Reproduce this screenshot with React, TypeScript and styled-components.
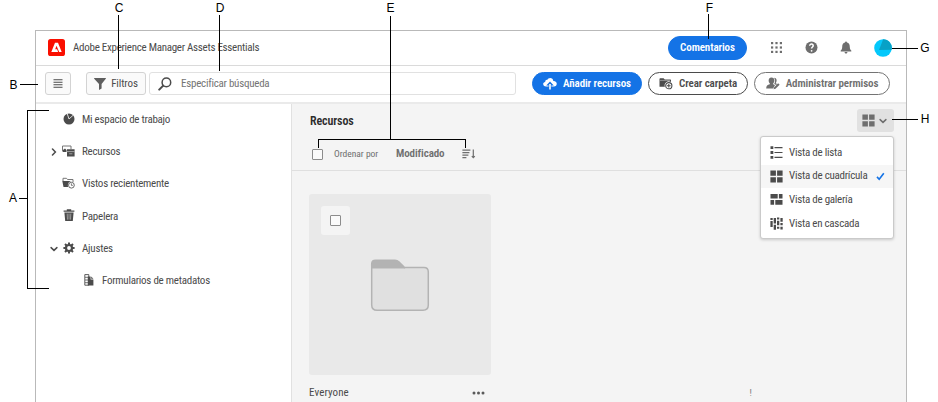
import React from 'react';
import styled, { createGlobalStyle } from 'styled-components';

const GlobalStyle = createGlobalStyle`
  *, *::before, *::after { box-sizing: border-box; }
  html, body { margin: 0; width: 938px; height: 402px; overflow: hidden; background: #fff; }
  body { font-family: Roboto, "Open Sans", sans-serif; font-size: 11px; font-stretch: 85%; color: #4b4b4b; }
  button { font: inherit; font-stretch: 85%; color: inherit; padding: 0; margin: 0; }
  svg { display: block; flex: none; }
`;

const Figure = styled.div`
  position: relative;
  width: 938px;
  height: 402px;
  padding: 30px 31px 0 35px;
  overflow: hidden;
`;

const Window = styled.div`
  display: flex;
  flex-direction: column;
  height: 372px;
  border: 1px solid #b9b9b9;
  border-bottom: 0;
  background: #fff;
`;

const Text = styled.span<{ $track?: number; $bold?: boolean; $size?: number; $color?: string }>`
  white-space: nowrap;
  line-height: 16px;
  letter-spacing: ${p => p.$track ?? (p.$bold ? -0.1 : -0.25)}px;
  font-weight: ${p => (p.$bold ? 650 : 400)};
  font-size: ${p => p.$size ?? 11}px;
  color: ${p => p.$color ?? 'inherit'};
`;

const Header = styled.header`
  display: flex;
  align-items: center;
  height: 35px;
  padding: 0 14px 1px 12px;
  border-bottom: 1px solid #dadada;
  gap: 8px;
`;

const HeaderActions = styled.div`
  display: flex;
  align-items: center;
  margin-left: auto;
`;

const HeaderIcons = styled.div`
  display: flex;
  align-items: center;
  margin-left: 23px;
  gap: 22px;
`;

const Pill = styled.button<{ $width: number; $height?: number; $tone: 'blue' | 'dark' | 'gray' }>`
  display: flex;
  align-items: center;
  justify-content: center;
  flex: none;
  width: ${p => p.$width}px;
  height: ${p => p.$height ?? 23}px;
  border-radius: 12px;
  border: 1px solid ${p => (p.$tone === 'blue' ? '#1473e6' : p.$tone === 'dark' ? '#4b4b4b' : '#747474')};
  background: ${p => (p.$tone === 'blue' ? '#1473e6' : '#fff')};
  color: ${p => (p.$tone === 'blue' ? '#fff' : p.$tone === 'dark' ? '#4b4b4b' : '#6e6e6e')};
  gap: 6px;
`;

const Toolbar = styled.div`
  display: flex;
  align-items: center;
  height: 38px;
  padding: 0 16px 1px 9px;
  border-bottom: 2px solid #eaeaea;
`;

const SquareButton = styled.button<{ $width: number }>`
  display: flex;
  align-items: center;
  justify-content: center;
  width: ${p => p.$width}px;
  height: 23px;
  gap: 5px;
  border: 1px solid #d3d3d3;
  border-radius: 3px;
  background: #fafafa;
`;

const FilterButton = styled(SquareButton)`
  margin-left: 15px;
`;

const SearchField = styled.div`
  display: flex;
  align-items: center;
  width: 367px;
  height: 23px;
  margin-left: 3px;
  padding-left: 8px;
  gap: 9px;
  border: 1px solid #e1e1e1;
  border-radius: 3px;
`;

const ToolbarActions = styled.div`
  display: flex;
  gap: 6px;
  margin-left: auto;
`;

const Body = styled.div`
  display: flex;
  flex: 1;
  min-height: 0;
`;

const Sidebar = styled.nav`
  width: 256px;
  border-right: 1px solid #e1e1e1;
`;

const NavRow = styled.div<{ $nested?: boolean }>`
  display: grid;
  grid-template-columns: 12px 13px auto;
  align-items: center;
  justify-content: start;
  height: 32.2px;
  padding-left: ${p => (p.$nested ? 34 : 14)}px;
  & > span { margin-left: 7px; }
  & > :nth-child(2) { justify-self: center; margin-bottom: 2px; }
`;

const Main = styled.main`
  flex: 1;
  background: #f4f4f4;
`;

const ContentHeader = styled.div`
  height: 67px;
  border-bottom: 1px solid #dfdfdf;
  padding: 5px 12px 0 18px;
`;

const TitleRow = styled.div`
  position: relative;
  display: flex;
  align-items: center;
  justify-content: space-between;
  height: 23px;
`;

const ViewButton = styled.button`
  display: flex;
  align-items: center;
  justify-content: center;
  gap: 4px;
  width: 37px;
  height: 23px;
  padding-right: 2px;
  border: 0;
  border-radius: 3px;
  background: #e1e1e1;
  color: #6e6e6e;
`;

const Menu = styled.div`
  position: absolute;
  top: 27px;
  right: 0;
  width: 134px;
  height: 103px;
  padding: 4px 0;
  border: 1px solid #cacaca;
  border-radius: 3px;
  background: #fff;
  box-shadow: 0 1px 3px rgba(0, 0, 0, 0.18);
  z-index: 2;
`;

const MenuItem = styled.div<{ $active?: boolean }>`
  display: flex;
  align-items: center;
  height: 23.6px;
  padding: 0 8px 0 9px;
  gap: 6px;
  background: ${p => (p.$active ? '#f6f6f6' : 'transparent')};
  & > :nth-child(3) { margin-left: auto; }
`;

const SortRow = styled.div`
  display: flex;
  align-items: center;
  height: 16px;
  margin-top: 14px;
  padding-left: 2px;
`;

const Checkbox = styled.span`
  width: 11px;
  height: 11px;
  border: 1px solid #8c8c8c;
  border-radius: 1px;
  background: #fafafa;
`;

const SortLabel = styled.div`
  display: flex;
  width: 62px;
  margin-left: 11px;
`;

const SortValue = styled.div`
  display: flex;
  width: 66px;
`;

const Gallery = styled.div`
  display: flex;
  padding: 23px 0 0 17px;
`;

const AssetCard = styled.article`
  width: 182px;
`;

const Thumbnail = styled.div`
  display: grid;
  grid-template-rows: 29px auto;
  width: 182px;
  height: 181px;
  padding: 12px;
  border-radius: 3px;
  background: #e9e9e9;
  & > svg { justify-self: center; margin-top: 24px; }
`;

const SelectBox = styled.div`
  display: grid;
  place-items: center;
  width: 29px;
  height: 29px;
  border-radius: 3px;
  background: #f4f4f4;
`;

const CardFooter = styled.div`
  display: flex;
  align-items: center;
  justify-content: space-between;
  height: 35px;
  padding-right: 6px;
`;

const CountStub = styled.div`
  margin: 190px 0 0 258.6px;
  color: #777;
  font-size: 9.5px;
  line-height: 17px;
`;

const Annotations = styled.svg`
  position: absolute;
  inset: 0;
  pointer-events: none;
  z-index: 5;
  text { font: 12px "Liberation Sans", Arial, sans-serif; fill: #000; text-anchor: middle; }
  path { fill: none; stroke: #000; stroke-width: 1; shape-rendering: crispEdges; }
`;

const callouts = [
  { label: 'A', x: 13, y: 202, d: 'M19 198.5H27M49 110.5H27.5V288.5H49' },
  { label: 'B', x: 13.5, y: 89, d: 'M20 84.5H38' },
  { label: 'C', x: 119, y: 12, d: 'M118.5 15V69' },
  { label: 'D', x: 220, y: 12, d: 'M219.5 15V71' },
  { label: 'E', x: 390.5, y: 12, d: 'M390.5 16V139M318.5 148V139.5H465.5V148' },
  { label: 'F', x: 709.5, y: 12, d: 'M708.5 14V39' },
  { label: 'G', x: 925, y: 52, d: 'M892 48.5H918' },
  { label: 'H', x: 925, y: 123, d: 'M892 119.5H918' },
];

const Logo = () => (
  <svg width="17" height="17" viewBox="0 0 17 17">
    <rect width="17" height="17" rx="2.6" fill="#fa0f00" />
    <path d="M7 3.7h3l3.7 9.3h-2.5L8.5 6.8l-1.3 3.5h1.9l1 2.7H3.3z" fill="#fff" />
  </svg>
);

const AppsGrid = () => (
  <svg width="13" height="13" viewBox="0 0 13 13" fill="#6e6e6e">
    {[1, 5.4, 9.8].map(y => [1, 5.4, 9.8].map(x => <rect key={`${x}-${y}`} x={x} y={y} width="2.2" height="2.2" />))}
  </svg>
);

const HelpIcon = () => (
  <svg width="13" height="13" viewBox="0 0 13 13">
    <circle cx="6.5" cy="6.5" r="6" fill="#6e6e6e" />
    <path d="M4.7 4.8C4.8 2.4 8.4 2.7 8.2 4.8c0 1.2-1.6 1.3-1.6 2.8" fill="none" stroke="#fff" strokeWidth="1.5" />
    <circle cx="6.6" cy="9.8" r=".9" fill="#fff" />
  </svg>
);

const BellIcon = () => (
  <svg width="12" height="13" viewBox="0 0 12 13" fill="#6e6e6e">
    <path d="M5 1.6a1 1 0 0 1 2 0C9 2 9.8 3.5 9.8 6c0 1.8.7 2.8 1.5 3.6v.9H.7v-.9C1.5 8.8 2.2 7.8 2.2 6 2.2 3.5 3 2 5 1.6zM4.6 11h2.8c0 2-2.8 2-2.8 0z" />
  </svg>
);

const Avatar = () => (
  <svg width="18" height="18" viewBox="0 0 18 18">
    <circle cx="9" cy="9" r="8.8" fill="#04c8fb" />
    <path d="M9.2.2A8.8 8.8 0 0 1 17.7 10.7L5 10.9z" fill="#07a1c6" />
  </svg>
);

const HamburgerIcon = () => (
  <svg width="10" height="9" viewBox="0 0 10 9"><path d="M.5.7h9M.5 3.2h9M.5 5.7h9M.5 8.2h9" stroke="#4b4b4b" strokeWidth="1.1" /></svg>
);

const FunnelIcon = () => (
  <svg width="12" height="12" viewBox="0 0 12 12" fill="#5e5e5e"><path d="M.5 0h11a.4.4 0 0 1 .3.7L7.6 6v4.5L5 12V6L.2.7A.4.4 0 0 1 .5 0z" /></svg>
);

const SearchIcon = () => (
  <svg width="14" height="14" viewBox="0 0 14 14" fill="none" stroke="#4b4b4b"><circle cx="8.4" cy="5.4" r="4.3" strokeWidth="1.5" /><path d="M5.2 8.6L1.2 12.6" strokeWidth="2" strokeLinecap="round" /></svg>
);

const UploadIcon = () => (
  <svg width="14" height="13" viewBox="0 0 14 13" fill="#fff">
    <path d="M5.6 9.6H3.1C-.7 9.4-.6 5.2 2.2 5 2.2 3.2 3.4 2.6 4.3 2.9 5.2.2 10.2.1 10.3 3.9c4.5-.2 4.5 5.5.6 5.7H8.4V8.6h2.4L7 4.6 3.2 8.6h2.4zM6.2 7h1.6v5.6H6.2z" />
  </svg>
);

const NewFolderIcon = () => (
  <svg width="14" height="13" viewBox="0 0 14 13">
    <path d="M.5 2Q.5 1.2 1.2 1.2H4.6L5.8 2.5H11.4Q12 2.5 12 3V5.1A4 4 0 0 0 5.9 9.7H.5z" fill="#4b4b4b" />
    <path d="M1 3.4h10" stroke="#fff" strokeWidth=".4" />
    <circle cx="9.8" cy="8.7" r="3.1" fill="#fff" stroke="#4b4b4b" strokeWidth="1.1" />
    <path d="M9.8 6.9v3.6M8 8.7h3.6" stroke="#4b4b4b" strokeWidth="1.1" />
  </svg>
);

const PermissionsIcon = () => (
  <svg width="14" height="13" viewBox="0 0 14 13" fill="#6e6e6e">
    <path d="M5.4.5c4 0 3.4 4.8 1.8 5.8v1l1.8.9-2 3.3H.2C.2 8.6 1.5 8 3.8 7.3v-1C2.2 5 2 .5 5.4.5z" />
    <path d="M8 .8c3 0 3.3 3.7 1.6 5.4l1.5.9-.9.8-2-.9C9.3 5.1 9.6 2.4 8 .8z" />
    <path d="M8 10.4l4.1-4.2 1.5 1.5-4.1 4.1-2 .5z" />
  </svg>
);

const Chevron = ({ down }: { down?: boolean }) => (
  <svg width="8" height="8" viewBox="0 0 8 8" fill="none" stroke="currentColor" strokeWidth="1.5" strokeLinecap="round">
    <path d={down ? 'M1.1 2.6L4 5.4 6.9 2.6' : 'M2.5 1L5.4 4 2.5 7'} />
  </svg>
);

const WorkspaceIcon = () => (
  <svg width="12" height="12" viewBox="0 0 12 12"><circle cx="6" cy="6" r="5.5" fill="#4b4b4b" /><path d="M6 6L4.2.6M6 6L10.2 2.2" stroke="#fff" strokeWidth=".8" /></svg>
);

const AssetsIcon = () => (
  <svg width="13" height="12" viewBox="0 0 13 12">
    <path d="M.5 6.5V1H9v3" fill="none" stroke="#777" />
    <path d="M1 7V5l2-1.5L4.5 5v2zM5 4.2h7.6v7.3H5z" fill="#4b4b4b" />
    <path d="M5 6.6h7.5M7.2 8.8h3.2" stroke="#ddd" strokeWidth=".6" />
  </svg>
);

const RecentIcon = () => (
  <svg width="13" height="12" viewBox="0 0 13 12">
    <path d="M1 4V1.3h3.5l1 1.2H11V5" fill="none" stroke="#777" />
    <path d="M.3 4h8.8C6 5 5.4 8 6.2 10H1.5z" fill="#4b4b4b" />
    <circle cx="9.4" cy="8.2" r="2.9" fill="#fff" stroke="#5a5a5a" strokeWidth=".9" />
    <path d="M9.4 6.4v2h1.4" fill="none" stroke="#5a5a5a" strokeWidth=".8" />
  </svg>
);

const TrashIcon = () => (
  <svg width="12" height="13" viewBox="0 0 12 13"><path d="M.6 1.4h3.2V.2h4.4v1.2h3.2v1.3H.6zM1.4 3.5h9.2l-.8 8.6H2.2z" fill="#4b4b4b" /><path d="M4.2 4.6l.3 6M6 4.6v6M7.8 4.6l-.3 6" stroke="#ccc" strokeWidth=".6" /></svg>
);

const GearIcon = () => (
  <svg width="12" height="12" viewBox="0 0 12 12" fill="none" stroke="#4b4b4b">
    <circle cx="6" cy="6" r="3" strokeWidth="2.2" />
    <path d="M6 .4v2M6 9.6v2M.4 6h2M9.6 6h2M2 2l1.5 1.5M8.5 8.5L10 10M10 2L8.5 3.5M3.5 8.5L2 10" strokeWidth="2" />
  </svg>
);

const MetadataIcon = () => (
  <svg width="10" height="12" viewBox="0 0 10 12">
    <path d="M.8.6h4v10.6h-4z" fill="#fff" stroke="#4b4b4b" strokeWidth=".9" />
    <path d="M1 3.3h4M1 6h4M1 8.7h4" stroke="#4b4b4b" strokeWidth=".8" />
    <path d="M3.8 2.4h2.8v3h2.8v6H3.8zM7.2 2.4l2.2 2.4H7.2z" fill="#4b4b4b" />
  </svg>
);

const SortIcon = () => (
  <svg width="14" height="10" viewBox="0 0 14 10" fill="none" stroke="#6e6e6e">
    <path d="M.4 1.1h8M.4 3.6h7M.4 6.1h6M.4 8.6h4" strokeWidth="1.2" />
    <path d="M11.3.6v7.8M9.8 7.1l1.5 1.5 1.5-1.5" strokeWidth="1.2" />
  </svg>
);

const GridIcon = ({ color = '#4b4b4b' }: { color?: string }) => (
  <svg width="13" height="13" viewBox="0 0 13 13" fill={color}><path d="M.4.5h5.5v5.3H.4zM7.1.5h5.5v5.3H7.1zM.4 7.2h5.5v5.3H.4zM7.1 7.2h5.5v5.3H7.1z" /></svg>
);

const ListIcon = () => (
  <svg width="13" height="13" viewBox="0 0 13 13"><path d="M.5.3h2.8v2.8H.5zM.5 5.1h2.8v2.8H.5zM.5 9.9h2.8v2.8H.5z" fill="#4b4b4b" /><path d="M4.5 1.7h8M4.5 6.5h8M4.5 11.3h8" stroke="#4b4b4b" strokeWidth="1.2" /></svg>
);

const GalleryIcon = () => (
  <svg width="13" height="13" viewBox="0 0 13 13" fill="#4b4b4b"><path d="M.5 1h7.2v4.5H.5zM8.9 1h3.6v4.5H8.9zM.5 7h3.6v4.8H.5zM5.3 7h7.2v4.8H5.3z" /></svg>
);

const WaterfallIcon = () => (
  <svg width="13" height="13" viewBox="0 0 13 13" fill="#4b4b4b"><path d="M.4 1h2.3v2H.4zM.4 4h2.3v6H.4zM3.7 1h2.3v5.5H3.7zM3.7 7.8h2.3v4.9H3.7zM7 .5h2.3v2H7zM7 3.8h2.3v4.5H7zM7 9.7h2.3v2H7zM10.4 1h2.3v3.8h-2.3zM10.4 6.1h2.3v2.2h-2.3zM10.4 9.7h2.3v2.8h-2.3z" /></svg>
);

const CheckIcon = () => (
  <svg width="9" height="9" viewBox="0 0 9 9"><path d="M1 4.9L3.2 7.3 7.8 1.2" fill="none" stroke="#1473e6" strokeWidth="1.6" /></svg>
);

const FolderArt = () => (
  <svg width="60" height="53" viewBox="0 0 60 53">
    <path d="M1.7 46V5Q1.7 1.2 5.5 1.2H25Q27.2 1.2 28.8 2.8L34.6 8.6H54Q58.3 8.6 58.3 13V46Q58.3 51.2 53 51.2H7Q1.7 51.2 1.7 46z" fill="#e0e0e0" stroke="#b3b3b3" strokeWidth="1.5" />
    <path d="M1.7 9.5V5Q1.7 1.2 5.5 1.2H25Q27.2 1.2 28.8 2.8L35.4 9.5z" fill="#b3b3b3" />
  </svg>
);

const MoreIcon = () => (
  <svg width="13" height="4" viewBox="0 0 13 4" fill="#5a5a5a"><circle cx="2" cy="2" r="1.5" /><circle cx="6.5" cy="2" r="1.5" /><circle cx="11" cy="2" r="1.5" /></svg>
);

const navItems = [
  { label: 'Mi espacio de trabajo', icon: <WorkspaceIcon /> },
  { label: 'Recursos', icon: <AssetsIcon />, chevron: 'right' },
  { label: 'Vistos recientemente', icon: <RecentIcon /> },
  { label: 'Papelera', icon: <TrashIcon /> },
  { label: 'Ajustes', icon: <GearIcon />, chevron: 'down' },
  { label: 'Formularios de metadatos', icon: <MetadataIcon />, nested: true },
];

const views = [
  { label: 'Vista de lista', icon: <ListIcon /> },
  { label: 'Vista de cuadrícula', icon: <GridIcon />, active: true },
  { label: 'Vista de galería', icon: <GalleryIcon /> },
  { label: 'Vista en cascada', icon: <WaterfallIcon /> },
];

export default function App() {
  return (
    <Figure>
      <GlobalStyle />
      <Window>
        <Header>
          <Logo />
          <Text $track={-0.28}>Adobe Experience Manager Assets Essentials</Text>
          <HeaderActions>
            <Pill $width={79} $height={24} $tone="blue"><Text $bold>Comentarios</Text></Pill>
            <HeaderIcons><AppsGrid /><HelpIcon /><BellIcon /><Avatar /></HeaderIcons>
          </HeaderActions>
        </Header>
        <Toolbar>
          <SquareButton $width={26}><HamburgerIcon /></SquareButton>
          <FilterButton $width={60}><FunnelIcon /><Text $track={-0.1}>Filtros</Text></FilterButton>
          <SearchField><SearchIcon /><Text $color="#747474">Especificar búsqueda</Text></SearchField>
          <ToolbarActions>
            <Pill $width={110} $tone="blue"><UploadIcon /><Text $bold>Añadir recursos</Text></Pill>
            <Pill $width={100} $tone="dark"><NewFolderIcon /><Text $bold>Crear carpeta</Text></Pill>
            <Pill $width={136} $tone="gray"><PermissionsIcon /><Text $bold>Administrar permisos</Text></Pill>
          </ToolbarActions>
        </Toolbar>
        <Body>
          <Sidebar>
            {navItems.map(item => (
              <NavRow key={item.label} $nested={item.nested}>
                {item.chevron ? <Chevron down={item.chevron === 'down'} /> : <i />}
                {item.icon}
                <Text>{item.label}</Text>
              </NavRow>
            ))}
          </Sidebar>
          <Main>
            <ContentHeader>
              <TitleRow>
                <Text $bold $size={12} $color="#2c2c2c">Recursos</Text>
                <ViewButton><GridIcon color="#6e6e6e" /><Chevron down /></ViewButton>
                <Menu>
                  {views.map(view => (
                    <MenuItem key={view.label} $active={view.active}>
                      {view.icon}<Text>{view.label}</Text>{view.active && <CheckIcon />}
                    </MenuItem>
                  ))}
                </Menu>
              </TitleRow>
              <SortRow>
                <Checkbox />
                <SortLabel><Text $size={9.5} $track={0} $color="#6e6e6e">Ordenar por</Text></SortLabel>
                <SortValue><Text $bold $color="#6e6e6e">Modificado</Text></SortValue>
                <SortIcon />
              </SortRow>
            </ContentHeader>
            <Gallery>
              <AssetCard>
                <Thumbnail><SelectBox><Checkbox /></SelectBox><FolderArt /></Thumbnail>
                <CardFooter><Text $track={0.1}>Everyone</Text><MoreIcon /></CardFooter>
              </AssetCard>
              <CountStub>!</CountStub>
            </Gallery>
          </Main>
        </Body>
      </Window>
      <Annotations width="938" height="402" viewBox="0 0 938 402">
        {callouts.map(c => (
          <g key={c.label}><path d={c.d} /><text x={c.x} y={c.y}>{c.label}</text></g>
        ))}
      </Annotations>
    </Figure>
  );
}
